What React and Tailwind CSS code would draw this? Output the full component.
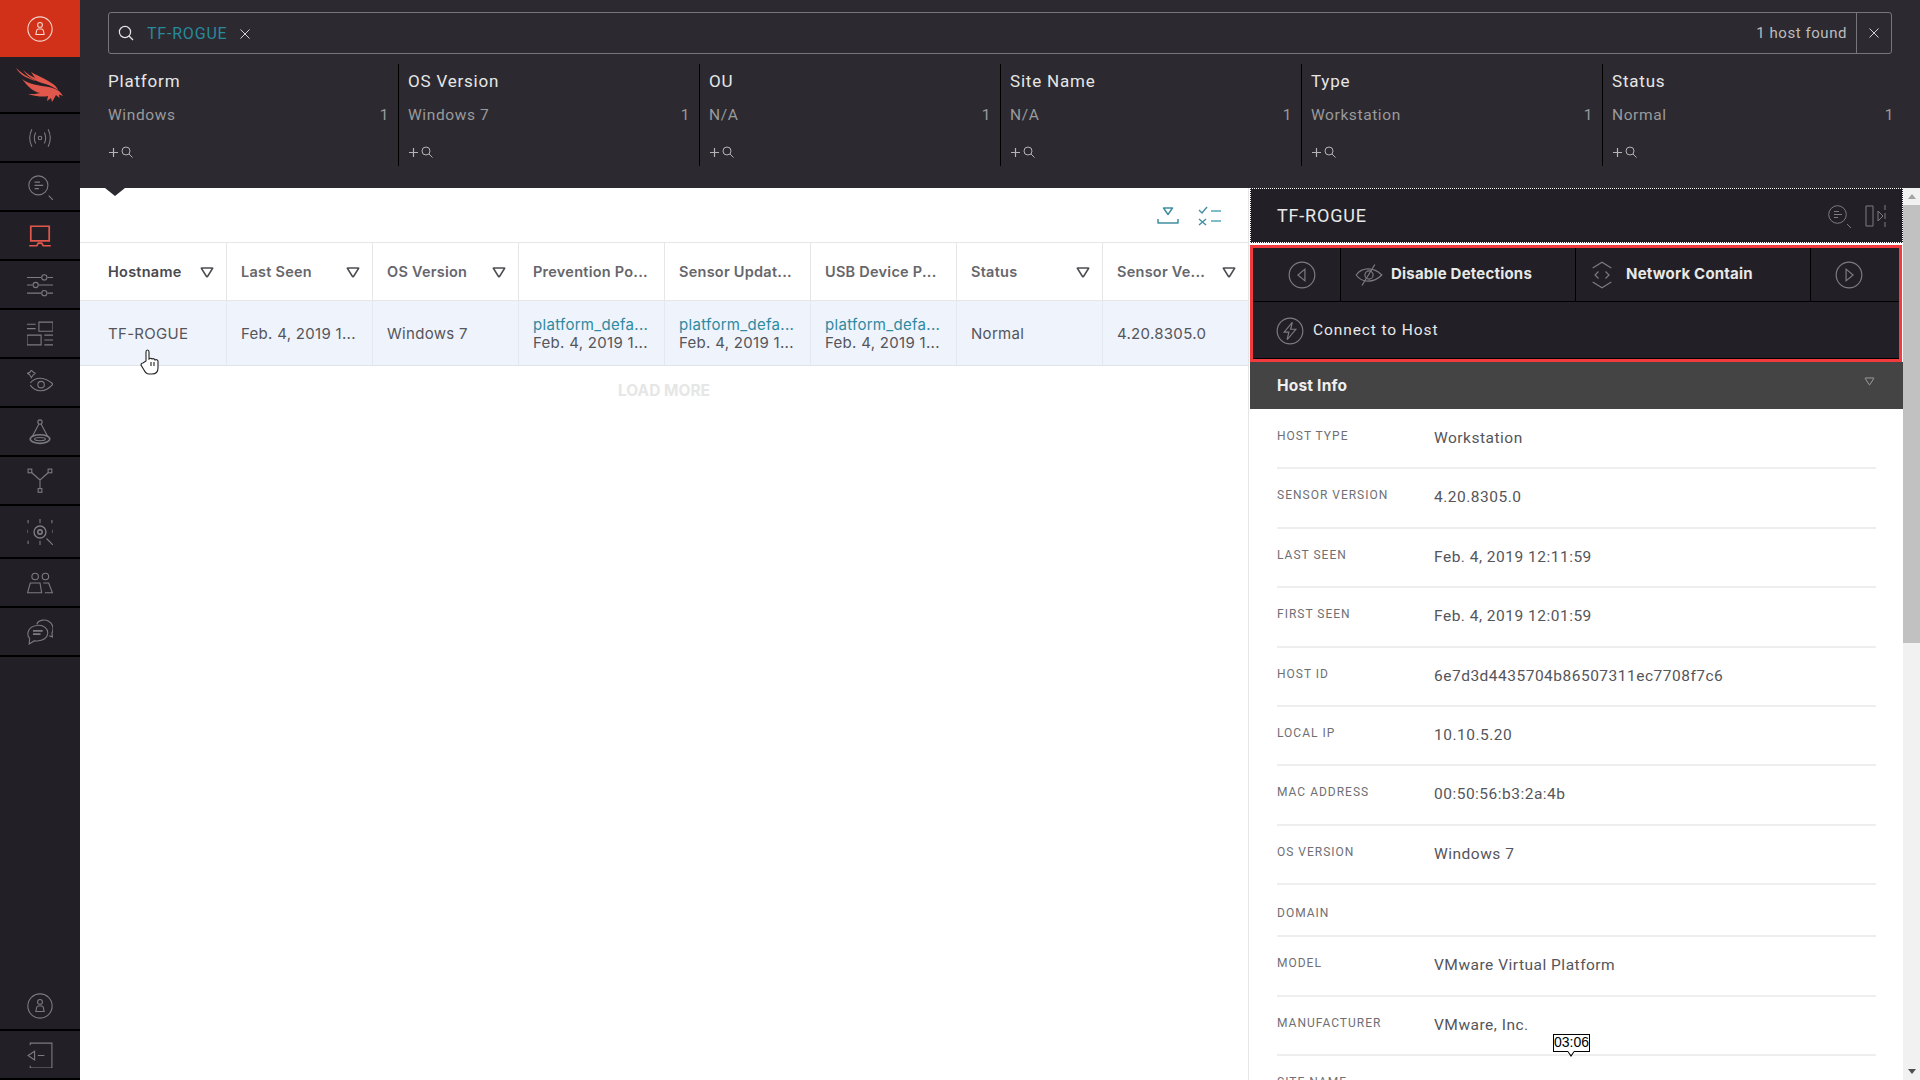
const Ic = ({ className = "", size = 30, box = 24, children }) => (
  <svg width={size} height={size} viewBox={`0 0 ${box} ${box}`} fill="none" stroke="currentColor" strokeWidth="1" className={className}>
    {children}
  </svg>
);

const Person = ({ className }) => (
  <Ic className={className} box={24} size={26}>
    <circle cx="12" cy="12" r="11.2" />
    <circle cx="12" cy="8.2" r="2.2" />
    <path d="M8.2 17 L8.9 13.4 Q9.2 12 10.5 12 H13.5 Q14.8 12 15.1 13.4 L15.8 17 Z" />
  </Ic>
);

const Falcon = () => (
  <svg width="48" height="36" viewBox="0 0 48 36" fill="#e2574c">
    <path d="M0 1 C5 6 12 10 20 14 C12 12 4 8 0 1Z" />
    <path d="M7 3 C12 8 20 12 30 15 C32 16 33 17 34 18 C23 16 12 11 7 3Z" />
    <path d="M15 5 C20 8 30 12 37 17 C40 19 41 21 42 23 C34 18 24 15 19 11 Z" />
    <path d="M6 12 C12 17 24 19 33 20 C38 21 42 23 44 25 L47 29 L43 27.5 L43.5 31 L40 28 L36 35 L35 31 L31 34 L32 29 C28 30 22 30 12 27 C17 27 21 27 24 26 C18 25 12 20 6 12Z" />
  </svg>
);

const sideIcons = [
  <Ic size={26}>
    <circle cx="12" cy="12" r="1.6" />
    <path d="M8 7 Q5.5 12 8 17 M16 7 Q18.5 12 16 17 M4.5 4 Q0.5 12 4.5 20 M19.5 4 Q23.5 12 19.5 20" />
  </Ic>,
  <Ic size={26}>
    <circle cx="10.5" cy="10.5" r="8.8" />
    <path d="M7 7.5 H12 M7 10.5 H15 M7 13.5 H11 M20 20 L24 24" />
  </Ic>,
  <Ic size={26} className="text-[#e2574c]">
    <path strokeWidth="1.6" d="M3.5 3 H20.5 V16.5 H3.5 Z M2 21 H9 L10.5 18.5 H13.5 L15 21 H22" />
  </Ic>,
  <Ic size={26}>
    <path d="M0 5 H13 M19 5 H24 M0 12 H5 M11 12 H24 M0 19.5 H13 M19 19.5 H24" />
    <circle cx="16" cy="5" r="2.4" />
    <circle cx="8" cy="12" r="2.4" />
    <circle cx="16" cy="19.5" r="2.4" />
  </Ic>,
  <Ic size={26}>
    <path d="M0 3 H8 M0 7 H8 M11 1 H24 V9.5 H11 Z M0 13 H13 V22 H0 Z M16 13 H24 M16 17.5 H24 M16 22 H24" />
  </Ic>,
  <Ic size={26}>
    <path d="M4 7 Q6 3.5 8 3 Q6 3 4 0 Q3 3 0 3 Q3 4 4 7Z" />
    <path d="M3 12 C8 6 16 6 24 13 C17 21 8 21 3 14" />
    <circle cx="13" cy="13.5" r="3" />
  </Ic>,
  <Ic size={26}>
    <circle cx="12" cy="2.8" r="2" />
    <path d="M11 4.6 L5 16 M13 4.6 L19 16" />
    <ellipse cx="12" cy="18.5" rx="9" ry="4" strokeWidth="1.5" />
    <ellipse cx="12" cy="18.5" rx="5" ry="1.5" />
  </Ic>,
  <Ic size={26}>
    <rect x="1" y="1" width="3.4" height="3.4" />
    <rect x="19.5" y="1" width="3.4" height="3.4" />
    <rect x="10.3" y="19" width="3.4" height="3.4" />
    <path d="M4.4 4.4 L12 11 L19.5 4.4 M12 11 V19" />
  </Ic>,
  <Ic size={26}>
    <circle cx="12" cy="12" r="5.5" strokeWidth="1.3" />
    <circle cx="12" cy="12" r="2" strokeWidth="1.5" />
    <path d="M12 0 V4 M1 1 V4 M23 1 V4 M0 10 V13 M24 10 V13 M1 20 V23 M12 20 V24 M18 18 L24 24" />
  </Ic>,
  <Ic size={26}>
    <circle cx="7.5" cy="6" r="3" />
    <circle cx="17" cy="6" r="3" />
    <path d="M3 12 H12 L13.5 21 H0.5 Z M15 12 H20 L23.5 21 H16.5" />
  </Ic>,
  <Ic size={26}>
    <path d="M9 5 C10 1 16 0 20 2 C24 4 25 9 23 13 L23.5 16.5 L20.5 15.5" />
    <path d="M9 6 C15 5 20 9 19 14 C18 19 12 21 7 20 L2 23 L2.5 18 C-1 14 1 7 9 6Z" />
    <path d="M5.5 11 H14.5 M5.5 14 H12.5" strokeWidth="1.5" />
  </Ic>,
];

const Sidebar = () => (
  <div className="w-20 shrink-0 bg-[#222026] flex flex-col justify-between text-[#7c7c80]">
    <div className="flex flex-col">
      <div className="h-[57px] bg-[#d13118] flex items-center justify-center text-[#f5d8d0]">
        <Person />
      </div>
      <div className="h-[57px] border-b-2 border-black flex items-center justify-center">
        <Falcon />
      </div>
      {sideIcons.map((icon, i) => (
        <div
          key={i}
          className={(i === 8 ? "h-[53px]" : "h-[49px]") + " border-b-2 border-black flex items-center justify-center"}
        >
          {icon}
        </div>
      ))}
    </div>
    <div className="flex flex-col">
      <div className="h-[49px] border-b-2 border-black flex items-center justify-center">
        <Person />
      </div>
      <div className="h-[49px] border-b-2 border-black flex items-center justify-center">
        <Ic size={26}>
          <path d="M3 3 V1 H23 V24 H3 V22 M1 12.5 L7 8.5 V16.5 Z M10 12.5 H16" />
        </Ic>
      </div>
    </div>
  </div>
);

const facets = [
  ["Platform", "Windows"],
  ["OS Version", "Windows 7"],
  ["OU", "N/A"],
  ["Site Name", "N/A"],
  ["Type", "Workstation"],
  ["Status", "Normal"],
];

const PlusSearch = () => (
  <div className="flex items-center gap-[2px] text-[#b4b4b4]">
    <svg width="11" height="11" viewBox="0 0 11 11" stroke="currentColor" strokeWidth="1.2">
      <path d="M5.5 1 V10 M1 5.5 H10" />
    </svg>
    <svg width="12" height="12" viewBox="0 0 12 12" stroke="currentColor" fill="none" strokeWidth="1">
      <circle cx="5" cy="5" r="4" />
      <path d="M8 8 L11.5 11.5" />
    </svg>
  </div>
);

const Header = () => (
  <div className="h-[188px] shrink-0 bg-[#2c2a30] pt-3 relative z-10">
    <div className="ml-7 w-[1784px] h-[42px] border border-[#77767a] rounded-[3px] flex items-center text-[#c9c9c9]">
      <svg width="16" height="16" viewBox="0 0 16 16" fill="none" stroke="#e4e4e4" strokeWidth="1.2" className="ml-[9px]">
        <circle cx="7" cy="7" r="5.6" />
        <path d="M11 11 L15 15" />
      </svg>
      <span className="ml-[13px] text-[#28899b] text-[16px] tracking-[0.8px] mt-[1px]">TF-ROGUE</span>
      <svg width="10" height="10" viewBox="0 0 10 10" stroke="#d0d0d0" className="ml-[13px] mt-[1px]">
        <path d="M0.5 0.5 L9.5 9.5 M9.5 0.5 L0.5 9.5" />
      </svg>
      <span className="ml-auto mr-[9px] text-[15px] tracking-[0.55px] text-[#bcbcbc] mt-[1px]">1 host found</span>
      <div className="w-[35px] h-full border-l border-[#77767a] flex items-center justify-center">
        <svg width="10" height="10" viewBox="0 0 10 10" stroke="#d0d0d0">
          <path d="M0.5 0.5 L9.5 9.5 M9.5 0.5 L0.5 9.5" />
        </svg>
      </div>
    </div>
    <div className="flex mt-[10px] h-[102px]">
      {facets.map(([title, value], i) => (
        <div
          key={title}
          className={
            i === 0
              ? "w-[318px] pl-7 pr-[9px] pt-[6px]"
              : "w-[301px] border-l border-black pl-[9px] pr-[9px] pt-[6px]"
          }
        >
          <div className="text-[17px] font-normal tracking-[0.8px] text-[#e6e6e6] leading-[22px]">{title}</div>
          <div className="flex justify-between text-[15.5px] tracking-[0.6px] text-[#9a9a9c] mt-[12px] leading-[22px]">
            <span>{value}</span>
            <span>1</span>
          </div>
          <div className="mt-[20px]">
            <PlusSearch />
          </div>
        </div>
      ))}
    </div>
    <div className="absolute left-[25px] bottom-[-8px] w-0 h-0 border-l-[10px] border-r-[10px] border-t-[8px] border-l-transparent border-r-transparent border-t-[#2c2a30]"></div>
  </div>
);

const Tri = ({ className = "text-[#4c4c52]", w = 14, h = 11, sw = 1.5 }) => (
  <svg width={w} height={h} viewBox="0 0 14 11" fill="none" stroke="currentColor" strokeWidth={sw} strokeLinejoin="round" className={className}>
    <path d="M1.5 1.5 Q1 1 2 1 H12 Q13 1 12.5 1.5 L7.5 9.5 Q7 10 6.5 9.5 Z" />
  </svg>
);

const columns = [
  { name: "Hostname", sort: true, value: "TF-ROGUE", dark: true },
  { name: "Last Seen", sort: true, value: "Feb. 4, 2019 1..." },
  { name: "OS Version", sort: true, value: "Windows 7" },
  { name: "Prevention Po...", link: true },
  { name: "Sensor Updat...", link: true },
  { name: "USB Device P...", link: true },
  { name: "Status", sort: true, value: "Normal" },
  { name: "Sensor Ve...", sort: true, value: "4.20.8305.0" },
];

const HostTable = () => (
  <div className="flex-1 bg-white relative font-['Inter',sans-serif]">
    <div className="h-[55px] pt-[1px] border-b border-[#e6e6e6] flex items-center justify-end gap-[19px] pr-[26px] text-[#3f8ea1]">
      <svg width="22" height="18" viewBox="0 0 22 18" fill="none" stroke="currentColor" strokeWidth="1.5" strokeLinejoin="round">
        <path d="M6.5 1 H15.5 L11 7.5 Z" />
        <path d="M1 12 V16 H21 V12" />
      </svg>
      <svg width="24" height="20" viewBox="0 0 24 20" fill="none" stroke="currentColor" strokeWidth="1.4">
        <path d="M1 4 L4 7 L9 1 M1 13 L8 19 M8 13 L1 19" />
        <path d="M13 5 H23 M13 15 H23" strokeWidth="2" stroke="#7ebcc9" />
      </svg>
    </div>
    <div className="flex h-[58px] border-b border-[#e6e6e6]">
      {columns.map((col, i) => (
        <div
          key={col.name}
          className={
            "flex items-center justify-between text-[14.5px] font-semibold tracking-[0.25px] pr-3 pt-[1px] " +
            (i === 0
              ? "w-[147px] pl-7 text-[#48484e] border-r border-[#e6e6e6]"
              : i === 7
                ? "w-[145px] pl-[14px] text-[#66666b]"
                : "w-[146px] pl-[14px] text-[#66666b] border-r border-[#e6e6e6]")
          }
        >
          <span className="whitespace-nowrap">{col.name}</span>
          {col.sort && <Tri />}
        </div>
      ))}
    </div>
    <div className="flex h-[65px] border-b border-[#dfe3ea] bg-[#eef3fc]">
      {columns.map((col, i) => (
        <div
          key={col.name}
          className={
            "flex flex-col justify-center text-[15px] tracking-[0.3px] leading-[18px] whitespace-nowrap pt-[2px] text-[#55555a] " +
            (i === 0 ? "w-[147px] pl-7 " : i === 7 ? "w-[145px] pl-[14px] " : "w-[146px] pl-[14px] ") +
            (i === 7 ? "" : "border-r border-[#e3e8f2]")
          }
        >
          {col.link ? (
            <>
              <span className="text-[#2e8aa0]">platform_defa...</span>
              <span>Feb. 4, 2019 1...</span>
            </>
          ) : (
            col.value
          )}
        </div>
      ))}
    </div>
    <div className="text-center mt-[13px] text-[15.5px] font-bold text-[#e6e6e6]">LOAD MORE</div>
    <svg width="20" height="26" viewBox="0 0 20 26" fill="#fff" stroke="#222" strokeWidth="1.1" className="absolute left-[60px] top-[161px]">
      <path d="M6 12 V3 Q6 1 7.5 1 Q9 1 9 3 V10 Q11 8.5 12 10 Q14 9 15 11 Q17 10 18 12 V19 Q18 25 12 25 H9 Q6 25 4 21 L1 16 Q1 14 3 14 Z" />
      <path d="M11 13 V17 M14 13 V17" />
    </svg>
  </div>
);

const info = [
  ["HOST TYPE", "Workstation"],
  ["SENSOR VERSION", "4.20.8305.0"],
  ["LAST SEEN", "Feb. 4, 2019 12:11:59"],
  ["FIRST SEEN", "Feb. 4, 2019 12:01:59"],
  ["HOST ID", "6e7d3d4435704b86507311ec7708f7c6"],
  ["LOCAL IP", "10.10.5.20"],
  ["MAC ADDRESS", "00:50:56:b3:2a:4b"],
  ["OS VERSION", "Windows 7"],
  ["DOMAIN", ""],
  ["MODEL", "VMware Virtual Platform"],
  ["MANUFACTURER", "VMware, Inc."],
  ["SITE NAME", ""],
];

const Panel = () => (
  <div className="w-[672px] shrink-0 flex bg-white h-[892px] font-['Roboto',sans-serif]">
    <div className="w-[655px] border-l border-[#e6e6e6] relative overflow-hidden">
      <div className="h-[55px] ml-[1px] bg-[#222026] border border-dotted border-white flex items-center justify-between pl-[26px] pr-[15px]">
        <span className="text-[18px] tracking-[0.8px] text-[#e8e8e8]">TF-ROGUE</span>
        <div className="flex items-center gap-[14px] text-[#7c7c80]">
          <Ic size={24}>
            <circle cx="10.5" cy="10.5" r="8.8" />
            <path d="M7 7.5 H12 M7 10.5 H15 M7 13.5 H11 M20 20 L24 24" />
          </Ic>
          <svg width="22" height="24" viewBox="0 0 22 24" fill="none" stroke="currentColor">
            <path d="M1 2 H8 V22 H1 Z M13 7 L18 12 L13 17 Z M20 1 V6 M20 9 V15 M20 18 V23" />
          </svg>
        </div>
      </div>
      <div className="mt-[2px] ml-[1px] mr-[1px] h-[117px] border-[3px] border-[#f23b3f] bg-[#222026] flex flex-col text-[#e8e8e8]">
        <div className="h-[54px] flex border-b border-black shrink-0">
          <div className="w-[88px] border-r border-black flex items-center justify-center text-[#7c7c80] pl-[10px]">
            <Ic size={28}>
              <circle cx="12" cy="12" r="11" />
              <path d="M14.5 7 L8.5 12 L14.5 17 Z" />
            </Ic>
          </div>
          <div className="w-[235px] border-r border-black flex items-center pl-[14px]">
            <Ic size={28} className="text-[#7c7c80]">
              <path d="M1 12 C6 5 16 5 23 12 C16 19 6 19 1 12Z M17 3 L6 21" />
              <circle cx="12" cy="12" r="3.5" />
            </Ic>
            <span className="ml-2 font-bold text-[15px] tracking-[0.2px] font-['Inter',sans-serif]">Disable Detections</span>
          </div>
          <div className="w-[235px] border-r border-black flex items-center pl-[12px]">
            <Ic size={28} className="text-[#7c7c80]">
              <path d="M4 6 L12 1 L20 6 M4 18 L12 23 L20 18 M9 9 L6 12 L9 15 M15 9 L18 12 L15 15" />
            </Ic>
            <span className="ml-[10px] font-bold text-[15px] tracking-[0.2px] font-['Inter',sans-serif]">Network Contain</span>
          </div>
          <div className="flex-1 flex items-center justify-center text-[#7c7c80] pr-[12px]">
            <Ic size={28}>
              <circle cx="12" cy="12" r="11" />
              <path d="M9.5 7 L15.5 12 L9.5 17 Z" />
            </Ic>
          </div>
        </div>
        <div className="flex-1 flex items-center pl-[23px] pt-[1px] border-b border-black">
          <Ic size={28} className="text-[#7c7c80]">
            <circle cx="12" cy="12" r="11" />
            <path d="M14 4.5 L7 13 H11 L9.5 19.5 L17 10.5 H12.5 Z" />
          </Ic>
          <span className="ml-[9px] text-[15.5px] tracking-[0.9px]">Connect to Host</span>
        </div>
      </div>
      <div className="h-[47px] ml-[1px] bg-[#444444] flex items-center justify-between pl-[27px] pr-[28px]">
        <span className="font-bold text-[15.5px] tracking-[0.2px] text-[#f0f0f0] font-['Inter',sans-serif]">Host Info</span>
        <Tri className="text-[#a8a8a8] -mt-2" w={11} h={9} sw={1.1} />
      </div>
      <div className="pl-[28px] pr-[27px] pt-[1px]">
        {info.map(([label, value]) => (
          <div
            key={label}
            className={
              "flex border-b-2 border-[#eeeeee] " +
              (label === "DOMAIN" ? "h-[52px] pt-[18px]" : "h-[59.4px] pt-[16px]")
            }
          >
            <span className="w-[157px] shrink-0 text-[12px] tracking-[1px] leading-[20px] text-[#6f6f74]">{label}</span>
            <span className="text-[15.5px] tracking-[0.5px] leading-[24px] text-[#55555a]">{value}</span>
          </div>
        ))}
      </div>
      <div className="absolute left-[304px] top-[846px] w-[37px] h-[18px] bg-white border border-black text-center text-[14px] leading-[15px] text-black font-['Liberation_Sans',sans-serif]">
        03:06
        <div className="absolute left-[13px] bottom-[-6px] w-0 h-0 border-l-[4px] border-r-[4px] border-t-[6px] border-l-transparent border-r-transparent border-t-black"></div>
        <div className="absolute left-[14px] bottom-[-4px] w-0 h-0 border-l-[3px] border-r-[3px] border-t-[4px] border-l-transparent border-r-transparent border-t-white"></div>
      </div>
    </div>
    <div className="w-[17px] bg-[#f1f1f1] flex flex-col items-center">
      <div className="h-[17px] flex items-center justify-center">
        <div className="w-0 h-0 border-l-[4px] border-r-[4px] border-b-[5px] border-l-transparent border-r-transparent border-b-[#a3a3a3]"></div>
      </div>
      <div className="w-full h-[438px] bg-[#c1c1c1]"></div>
      <div className="mt-auto h-[17px] flex items-center justify-center">
        <div className="w-0 h-0 border-l-[4px] border-r-[4px] border-t-[5px] border-l-transparent border-r-transparent border-t-[#505050]"></div>
      </div>
    </div>
  </div>
);

export default function App() {
  return (
    <div className="w-[1920px] h-[1080px] flex overflow-hidden font-['Roboto',sans-serif]">
      <Sidebar />
      <div className="flex-1 flex flex-col min-w-0">
        <Header />
        <div className="flex flex-1 min-h-0">
          <HostTable />
          <Panel />
        </div>
      </div>
    </div>
  );
}
